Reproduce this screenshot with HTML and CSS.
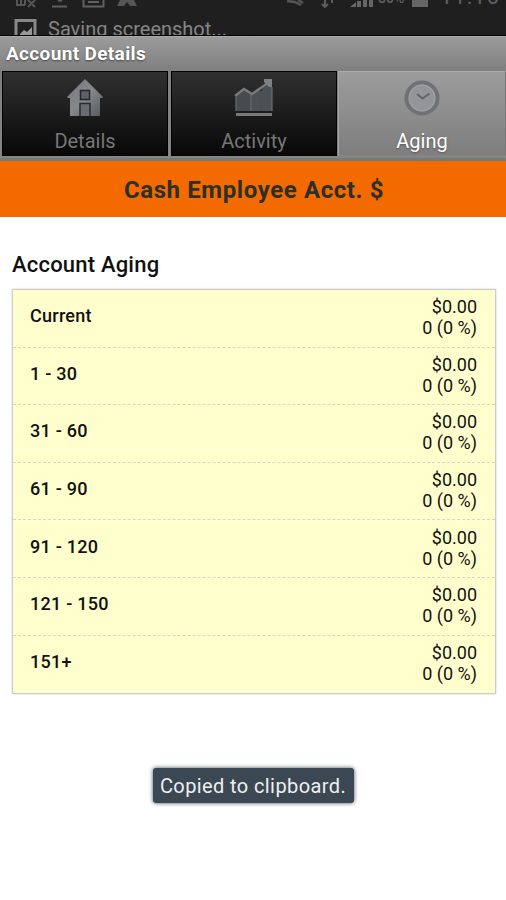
FILE: index.html
```html
<!DOCTYPE html>
<html lang="en">
<head>
    <meta charset="UTF-8">
    <meta name="viewport" content="width=device-width, initial-scale=1.0">
    <title>Account Details</title>

    <link rel="stylesheet" href="styles.css">
</head>
<body>
    <div class="notifications">
        <div class="status-bar">
            <svg class="status-icons" width="160" height="10" viewBox="0 0 160 10">
                <path d="M17 0v4M21 0v5M25 0v5M16 5h9M28 0l7 7M35 0l-7 7" stroke="#555" stroke-width="2" fill="none"/>
                <path d="M52 6.500h15M58 0l2 1 2-1" stroke="#606060" stroke-width="2" fill="none"/>
                <path d="M83.500 0v6.500h20V0M88 2h11" stroke="#606060" stroke-width="2" fill="none"/>
                <path d="M120 0h14l3 6h-7l-3-4-3 4h-7z" fill="#555"/>
            </svg>
            <svg class="status-icons" width="120" height="10" viewBox="0 0 120 10">
                <path d="M32 1l8 1 6 3M43 0l5 3" stroke="#555" stroke-width="2.500" fill="none"/>
                <path d="M70 0v7M67 4l3 3 3-3M77 0v3" stroke="#5c5c5c" stroke-width="2" fill="none"/>
                <path d="M95 7l6-5v5zM102 1h4v6h-4zM108 0h4v7h-4zM114 0h4v7h-4z" fill="#666"/>
            </svg>
            <span class="battery-text">80%</span>
            <span class="battery"></span>
            <span class="clock">11:16</span>
        </div>
        <div class="notice">
            <svg width="24" height="24" viewBox="0 0 24 24">
                <path d="M2 3.500h19V24H2z" fill="none" stroke="#888" stroke-width="3"/>
                <path d="M6 17l4-4 3 2 5-5v12H6z" fill="#999"/>
            </svg>
            <span>Saving screenshot...</span>
        </div>
    </div>

    <header class="top">
        <h1>Account Details</h1>
        <nav class="tabs">
            <a class="tab">
                <svg width="40" height="40" viewBox="0 0 40 40">
                    <defs>
                        <linearGradient id="metal" x1="0" y1="0" x2="1" y2="1">
                            <stop offset="0" stop-color="#77797c"/>
                            <stop offset="0.5" stop-color="#85878a"/>
                            <stop offset="1" stop-color="#55585b"/>
                        </linearGradient>
                    </defs>
                    <path d="M20 1L38 19l-1 1h-2v18H5V20H3l-1-1z" fill="url(#metal)"/>
                    <path d="M15.500 12.500h9v9h-9z" fill="#5b6268" stroke="#22272b" stroke-width="1.500"/>
                    <path d="M15 38V25.500h10V38" fill="#686c70" stroke="#292d31" stroke-width="1.500"/>
                </svg>
                <span>Details</span>
            </a>
            <a class="tab">
                <svg width="40" height="40" viewBox="0 0 40 40">
                    <path d="M2 18l8-6 8 4v17H2z" fill="#484b4d"/>
                    <path d="M18 17l8-5v21h-8zM28 11l10-7v29H28z" fill="#4d5153"/>
                    <path d="M1 18l9-7 8 5L34 5" fill="none" stroke="#777b7d" stroke-width="2.500"/>
                    <path d="M30 1h8v8h-3l-5-5z" fill="#7d8183"/>
                    <path d="M2 19v14M17 17v16M27 13v20M38 9v24" stroke="#686c6f" stroke-width="1.200"/>
                    <path d="M2 35h36v3H2z" fill="#77797a"/>
                </svg>
                <span>Activity</span>
            </a>
            <a class="tab active">
                <svg width="40" height="40" viewBox="0 0 40 40">
                    <circle cx="20" cy="20" r="15.500" fill="#939597" stroke="#6f7174" stroke-width="4"/>
                    <circle cx="20" cy="20" r="12.800" fill="none" stroke="#a0a1a3" stroke-width="1.200"/>
                    <path d="M15 16l5.500 4.500 7-5" fill="none" stroke="#62666b" stroke-width="2"/>
                </svg>
                <span>Aging</span>
            </a>
        </nav>
    </header>

    <div class="account-name">Cash Employee Acct. $</div>

    <main>
        <h2>Account Aging</h2>
        <ul class="aging">
            <li><strong>Current</strong><span>$0.00<br>0 (0 %)</span></li>
            <li><strong>1 - 30</strong><span>$0.00<br>0 (0 %)</span></li>
            <li><strong>31 - 60</strong><span>$0.00<br>0 (0 %)</span></li>
            <li><strong>61 - 90</strong><span>$0.00<br>0 (0 %)</span></li>
            <li><strong>91 - 120</strong><span>$0.00<br>0 (0 %)</span></li>
            <li><strong>121 - 150</strong><span>$0.00<br>0 (0 %)</span></li>
            <li><strong>151+</strong><span>$0.00<br>0 (0 %)</span></li>
        </ul>
    </main>

    <div class="toast">Copied to clipboard.</div>
</body>
</html>
```
FILE: styles.css
```css
* {
    margin: 0;
    padding: 0;
    box-sizing: border-box;
}

body {
    font-family: Roboto, sans-serif;
    background: #fff;
    color: #111;
    height: 900px;
    overflow: hidden;
}

/* Android status area */
.notifications {
    height: 36px;
    background: #1f1f1f;
    border-bottom: 1px solid #050505;
    overflow: hidden;
}

.status-bar {
    display: flex;
    height: 17px;
    color: #606060;
}

.status-icons {
    flex: none;
}

.status-icons + .status-icons {
    margin-left: 95px;
    margin-right: 3px;
    width: 120px;
}

.battery-text {
    font-size: 14px;
    font-weight: 500;
    line-height: 16px;
    margin-top: -10px;
    width: 32px;
}

.battery {
    width: 16px;
    height: 7px;
    background: #666;
    margin-left: 2px;
}

.clock {
    font-size: 22px;
    line-height: 26px;
    margin-top: -16px;
    margin-left: 12px;
    letter-spacing: 1px;
}

.notice {
    display: flex;
    padding-left: 14px;
    color: #858585;
    font-size: 20px;
    line-height: 24px;
}

.notice svg {
    margin-right: 10px;
}

/* Title and tabs */
.top {
    height: 125px;
    background: linear-gradient(#9c9c9c, #808080 32px, #858585);
    border-top: 1px solid #aaa;
    border-bottom: 3px solid #737a7c;
}

h1 {
    height: 34px;
    padding-left: 6px;
    font-size: 19px;
    line-height: 34px;
    letter-spacing: 0.35px;
    color: #fff;
    text-shadow: 0 1px 2px #444;
}

.tabs {
    display: grid;
    grid-template-columns: 166px 166px 1fr;
    gap: 3px;
    padding-left: 2px;
}

.tab {
    display: flex;
    flex-direction: column;
    align-items: center;
    height: 85px;
    padding-top: 6px;
    background: linear-gradient(#303030, #080808);
    border: 1px solid #000;
    color: #777;
    font-size: 20px;
    line-height: 24px;
}

.tab svg {
    margin-bottom: 11px;
}

.tab.active {
    margin-left: -2px;
    background: linear-gradient(#9c9c9c, #7e7e7e);
    border-color: #aaa #757575 #858585 #a5a5a5;
    color: #fff;
    text-shadow: 0 1px 2px #555;
}

.account-name {
    height: 56px;
    background: #f36b00;
    color: #2c3029;
    font-size: 24px;
    font-weight: bold;
    letter-spacing: 0.6px;
    line-height: 58px;
    padding-left: 2px;
    text-align: center;
}

main {
    padding: 35px 10px 0 12px;
}

h2 {
    font-size: 22px;
    font-weight: 500;
    letter-spacing: 0.2px;
    line-height: 26px;
}

.aging {
    list-style: none;
    margin-top: 11px;
    background: #ffffce;
    border: 1px solid #ccc;
    box-shadow: 0 0 2px #ccc;
}

.aging li {
    display: flex;
    justify-content: space-between;
    align-items: center;
    height: 57.6px;
    padding: 0 18px 2px 17px;
    border-bottom: 1px dashed #d8d8c0;
    font-size: 18px;
    line-height: 21px;
}

.aging li:last-child {
    height: 57px;
    border-bottom: none;
}

.aging strong {
    font-weight: 500;
    letter-spacing: 0.25px;
    margin-bottom: 3px;
}

.aging span {
    text-align: right;
}

.toast {
    width: 201px;
    height: 35px;
    margin: 74px auto 0;
    background: #3b4752;
    border-radius: 3px;
    box-shadow: 0 0 4px #444b53;
    color: #f0f0f0;
    font-size: 20px;
    letter-spacing: 0.4px;
    line-height: 36px;
    text-align: center;
    white-space: nowrap;
}
```
